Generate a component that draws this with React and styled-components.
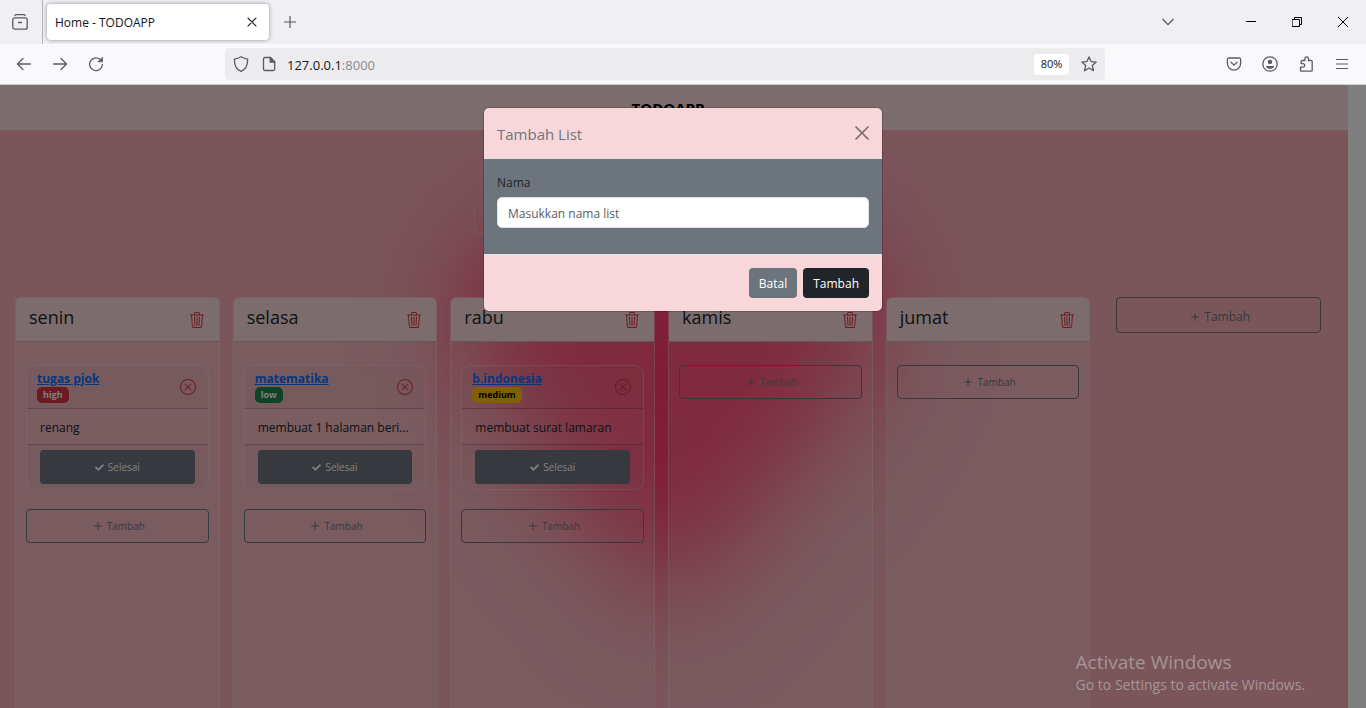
import React from "react";
import styled, { createGlobalStyle, css } from "styled-components";
import { BsTrash3, BsXCircle, BsSearch, BsPlus } from "react-icons/bs";
import { FaCheck } from "react-icons/fa";

const GlobalStyle = createGlobalStyle`
  *, *::before, *::after { box-sizing: border-box; }
  body {
    margin: 0;
    font-family: "Open Sans", "Segoe UI", "Noto Sans", sans-serif;
    font-size: 12px;
    line-height: 18px;
    color: #212529;
  }
  button, input { font: inherit; }
`;

const Window = styled.div`
  display: flex;
  flex-direction: column;
  height: 100vh;
  overflow: hidden;
  position: relative;
`;

/* ---------- browser frame ---------- */

const TabStrip = styled.div`
  display: flex;
  align-items: center;
  flex: none;
  height: 44px;
  background: #f0eff4;
`;

const ToolButton = styled.button`
  display: grid;
  place-items: center;
  flex: none;
  width: ${(p) => p.$width || 36}px;
  height: 36px;
  padding: 0;
  border: 0;
  background: none;
  color: ${(p) => p.$color || "#5b5b66"};
`;

const Divider = styled.div`
  width: 1px;
  height: 44px;
  margin: 0 3px 0 2px;
  background: #b4b4b9;
`;

const Tab = styled.div`
  display: flex;
  align-items: center;
  justify-content: space-between;
  width: 222px;
  height: 36px;
  margin-left: 1px;
  padding: 0 5px 0 8px;
  border-radius: 4px;
  background: #fff;
  box-shadow: 0 0 4px rgba(0, 0, 0, 0.4);
  color: #15141a;
  font-size: 12px;
`;

const TabTitle = styled.span`
  padding-top: 2px;
`;

const Spacer = styled.div`
  flex: 1;
`;

const WindowControls = styled.div`
  display: flex;
  margin-left: 42px;
`;

const Toolbar = styled.div`
  display: flex;
  align-items: center;
  flex: none;
  height: 41px;
  padding: 0 6px;
  background: #f9f9fb;
  border-bottom: 1px solid #cccfd0;
`;

const AddressBar = styled.div`
  display: flex;
  align-items: center;
  flex: 0 1 880px;
  height: 32px;
  margin: 0 auto;
  padding: 0 2px;
  border-radius: 4px;
  background: #ececee;
`;

const AddressIcon = styled.span`
  display: grid;
  place-items: center;
  width: 28px;
  color: #5b5b66;
`;

const Address = styled.div`
  flex: 1;
  padding: 2px 0 0 4px;
  font-size: 13px;
  color: #15141a;
`;

const Port = styled.span`
  color: #8a8a90;
`;

const Zoom = styled.button`
  width: 35px;
  height: 21px;
  padding: 0;
  margin-right: 6px;
  border: 0;
  border-radius: 3px;
  background: #fff;
  color: #15141a;
  font-size: 11px;
`;

const Icon = ({ size = 16, children, ...rest }) => (
  <svg
    width={size}
    height={size}
    viewBox={`0 0 ${size} ${size}`}
    fill="none"
    stroke="currentColor"
    strokeWidth="1.3"
    strokeLinecap="round"
    strokeLinejoin="round"
    aria-hidden="true"
    {...rest}
  >
    {children}
  </svg>
);

/* ---------- page ---------- */

const Viewport = styled.div`
  display: flex;
  flex: 1;
  min-height: 0;
  position: relative;
`;

const Page = styled.main`
  flex: 1;
  min-width: 0;
  position: relative;
  overflow: hidden;
  background: #f4acb7;
`;

const ScrollTrack = styled.div`
  width: 18px;
  background: #fff;
`;

const Wallpaper = styled.svg`
  position: absolute;
  inset: 0;
  width: 100%;
  height: 100%;
`;

const Content = styled.div`
  position: relative;
`;

const Navbar = styled.header`
  height: 45px;
  padding: 10px 12px 0 0;
  background: #f9d9db;
  text-align: center;
`;

const Brand = styled.a`
  color: #000;
  font-size: 15px;
  line-height: 26px;
  font-weight: 700;
  text-decoration: none;
`;

const SearchBox = styled.label`
  display: flex;
  align-items: center;
  width: 400px;
  max-width: 90%;
  height: 34px;
  margin: 70px auto 63px;
  padding: 0 7px;
  border: 1px solid #dcb9be;
  border-radius: 8px;
  color: #dcb9be;
`;

const SearchInput = styled.input`
  flex: 1;
  border: 0;
  background: none;
  outline: 0;
`;

const Board = styled.div`
  display: flex;
  align-items: flex-start;
  gap: 13px;
  padding: 0 27px 0 15px;
`;

const Column = styled.section`
  flex: 1 1 2px;
  min-width: 0;
  height: 520px;
  border: 1px solid rgba(255, 235, 235, 0.3);
  border-radius: 6px;
  background: rgba(255, 255, 255, 0.13);
  overflow: hidden;
`;

const ColumnHeader = styled.div`
  display: flex;
  align-items: center;
  justify-content: space-between;
  height: 44px;
  padding: 0 14px 0 13px;
  background: #f9d9db;
  border-bottom: 1px solid #c9acaf;
`;

const ColumnTitle = styled.h2`
  margin: 0 0 6px;
  font-size: 18px;
  line-height: 24px;
  font-weight: 400;
`;

const IconButton = styled.button`
  display: flex;
  padding: 0;
  border: 0;
  background: none;
  color: #dc3545;
`;

const ColumnBody = styled.div`
  display: flex;
  flex-direction: column;
  gap: 19px;
  padding: 23px 10px;
`;

const Task = styled.article`
  border: 1px solid rgba(255, 235, 235, 0.28);
  border-radius: 9px;
  background: rgba(255, 255, 255, 0.06);
  overflow: hidden;
`;

const TaskHeader = styled.div`
  display: flex;
  align-items: center;
  justify-content: space-between;
  height: 43px;
  padding: 0 12px 0 10px;
  background: rgba(33, 37, 41, 0.03);
  border-bottom: 1px solid rgba(0, 0, 0, 0.2);
`;

const TaskHeading = styled.div`
  display: flex;
  flex-direction: column;
  align-items: flex-start;
  padding-bottom: 2px;
`;

const TaskLink = styled.a`
  color: #0d6efd;
  font-size: 12px;
  line-height: 17px;
  font-weight: 700;
`;

const badgeTones = {
  high: css`
    background: #dc3545;
    color: #fff;
  `,
  low: css`
    background: #198754;
    color: #fff;
  `,
  medium: css`
    background: #ffc107;
    color: #000;
  `,
};

const Badge = styled.span`
  padding: 0 6px;
  border-radius: 5px;
  font-size: 9px;
  line-height: 16px;
  font-weight: 700;
  ${(p) => badgeTones[p.$tone]}
`;

const TaskText = styled.p`
  margin: 0;
  padding: 10px 13px 7px;
`;

const TaskFooter = styled.div`
  padding: 5px 13px;
  background: rgba(33, 37, 41, 0.03);
  border-top: 1px solid rgba(0, 0, 0, 0.2);
`;

const BoardButton = styled.button`
  display: flex;
  align-items: center;
  justify-content: center;
  gap: ${(p) => (p.$solid ? 4 : 1)}px;
  width: 100%;
  height: ${(p) => (p.$large ? 36 : 34)}px;
  padding: ${(p) => (p.$large ? 3 : 0)}px 0 0;
  border: 1px solid #6c757d;
  border-radius: ${(p) => (p.$solid ? 3 : 4)}px;
  background: ${(p) => (p.$solid ? "#6c757d" : "transparent")};
  color: ${(p) => (p.$solid ? "#fff" : "#6c757d")};
  font-size: ${(p) => (p.$large ? 12 : 10)}px;
`;

const NewColumn = styled.div`
  flex: 1 1 2px;
  min-width: 0;
  margin-left: 13px;
`;

/* ---------- dialog ---------- */

const Backdrop = styled.div`
  position: absolute;
  inset: 0;
  display: flex;
  align-items: flex-start;
  justify-content: center;
  padding-top: 23px;
  background: rgba(0, 0, 0, 0.5);
`;

const Dialog = styled.form`
  width: 398px;
  max-width: 90%;
  border-radius: 5px;
  background: #f8d7da;
  box-shadow: 0 0 0 1px rgba(0, 0, 0, 0.18);
  overflow: hidden;
`;

const DialogHeader = styled.div`
  display: flex;
  align-items: center;
  justify-content: space-between;
  height: 51px;
  padding: 0 13px;
  border-bottom: 1px solid #dee2e6;
`;

const DialogTitle = styled.h1`
  margin: 0;
  padding-top: 2px;
  font-size: 15px;
  line-height: 24px;
  font-weight: 400;
  color: #6c757d;
`;

const CloseButton = styled.button`
  display: flex;
  padding: 0;
  border: 0;
  background: none;
  color: #7c6c6d;
`;

const DialogBody = styled.div`
  display: flex;
  flex-direction: column;
  gap: 5px;
  padding: 15px 13px 26px;
  background: #6c757d;
`;

const Field = styled.input`
  height: 31px;
  padding: 2px 10px 0;
  border: 1px solid #dee2e6;
  border-radius: 5px;
  background: #fff;
  font-size: 12px;
  &::placeholder {
    color: #595c5f;
    opacity: 1;
  }
`;

const DialogFooter = styled.div`
  display: flex;
  justify-content: flex-end;
  gap: 6px;
  padding: 13px;
  border-top: 1px solid #dee2e6;
`;

const DialogButton = styled.button`
  height: 30px;
  padding: 2px 10px 0;
  border: 0;
  border-radius: 4px;
  background: ${(p) => (p.$dark ? "#212529" : "#6c757d")};
  color: #fff;
`;

const Watermark = styled.div`
  position: absolute;
  right: 61px;
  bottom: 13px;
  color: #a69496;
  font-size: 14px;
  line-height: 20px;
`;

const WatermarkTitle = styled.div`
  font-size: 19px;
  line-height: 26px;
`;

const columns = [
  { name: "senin", tasks: [{ title: "tugas pjok", level: "high", text: "renang" }] },
  {
    name: "selasa",
    tasks: [{ title: "matematika", level: "low", text: "membuat 1 halaman beri..." }],
  },
  {
    name: "rabu",
    tasks: [{ title: "b.indonesia", level: "medium", text: "membuat surat lamaran" }],
  },
  { name: "kamis", tasks: [] },
  { name: "jumat", tasks: [] },
];

const AddButton = ({ large }) => (
  <BoardButton type="button" $large={large}>
    <BsPlus size={16} />
    Tambah
  </BoardButton>
);

const TaskCard = ({ task }) => (
  <Task>
    <TaskHeader>
      <TaskHeading>
        <TaskLink href="#task">{task.title}</TaskLink>
        <Badge $tone={task.level}>{task.level}</Badge>
      </TaskHeading>
      <IconButton type="button" aria-label="Hapus tugas">
        <BsXCircle size={16} />
      </IconButton>
    </TaskHeader>
    <TaskText>{task.text}</TaskText>
    <TaskFooter>
      <BoardButton type="button" $solid>
        <FaCheck size={9} />
        Selesai
      </BoardButton>
    </TaskFooter>
  </Task>
);

const BrowserChrome = () => (
  <>
    <TabStrip>
      <ToolButton $width={40} aria-label="Recent browsing">
        <Icon>
          <path d="M3 1.5 Q3 .7 4 .7 H12 Q13 .7 13 1.5" />
          <rect x=".8" y="3.8" width="14.4" height="11.4" rx="2" />
          <path d="M6.5 8.5h3" />
        </Icon>
      </ToolButton>
      <Divider />
      <Tab>
        <TabTitle>Home - TODOAPP</TabTitle>
        <ToolButton $width={24} $color="#2b2a33" aria-label="Close tab">
          <Icon size={8} strokeWidth="1.1" overflow="visible">
            <path d="M0 0l8 8M8 0l-8 8" />
          </Icon>
        </ToolButton>
      </Tab>
      <ToolButton $width={42} aria-label="New tab">
        <Icon size={12} strokeWidth="1.2">
          <path d="M6 .5v11M.5 6h11" />
        </Icon>
      </ToolButton>
      <Spacer />
      <ToolButton aria-label="List all tabs">
        <Icon size={12}>
          <path d="M.8 3.2L6 8.6l5.2-5.4" />
        </Icon>
      </ToolButton>
      <WindowControls>
        <ToolButton $width={46} $color="#000" aria-label="Minimize">
          <Icon size={10} strokeWidth="1" strokeLinecap="butt">
            <path d="M0 4.5h10" />
          </Icon>
        </ToolButton>
        <ToolButton $width={46} $color="#000" aria-label="Restore">
          <Icon size={10} strokeWidth="1" strokeLinejoin="miter">
            <path d="M.5 2.5h7v7h-7zM2.500 2.500V.5h7v7h-2" />
          </Icon>
        </ToolButton>
        <ToolButton $width={46} $color="#000" aria-label="Close window">
          <Icon size={10} strokeWidth="1">
            <path d="M0 0l10 10M10 0L0 10" />
          </Icon>
        </ToolButton>
      </WindowControls>
    </TabStrip>
    <Toolbar>
      <ToolButton aria-label="Back">
        <Icon>
          <path d="M14.500 8H1.800M7 2.500L1.500 8 7 13.500" />
        </Icon>
      </ToolButton>
      <ToolButton aria-label="Forward">
        <Icon>
          <path d="M1.500 8h12.700M9 2.500L14.500 8 9 13.500" />
        </Icon>
      </ToolButton>
      <ToolButton aria-label="Reload">
        <Icon>
          <path d="M13 4.200A6.400 6.400 0 1 0 14.400 8.500" />
          <path d="M14.500 1.500v4.300h-4.300z" fill="currentColor" strokeWidth=".8" />
        </Icon>
      </ToolButton>
      <AddressBar>
        <AddressIcon>
          <Icon>
            <path d="M8 .8c2 1.300 4 2 6.600 2.300C14.800 8.800 13.500 13 8 15.300 2.500 13 1.200 8.800 1.400 3.100 4 2.800 6 2.100 8 .8z" />
          </Icon>
        </AddressIcon>
        <AddressIcon>
          <Icon>
            <path d="M4 1.500h5.500L13.700 5.700V13a1.500 1.500 0 0 1-1.500 1.500H4A1.500 1.500 0 0 1 2.500 13V3A1.500 1.500 0 0 1 4 1.500z" />
            <path d="M9.200 1.500v4.700h4.500z" fill="currentColor" />
          </Icon>
        </AddressIcon>
        <Address>
          127.0.0.1<Port>:8000</Port>
        </Address>
        <Zoom type="button">80%</Zoom>
        <ToolButton $width={28} aria-label="Bookmark this page">
          <Icon>
            <path d="M8 .9l2.100 4.700 5.100.5-3.900 3.400 1.200 5.200L8 12l-4.500 2.700 1.200-5.200L.8 6.100l5.100-.5z" />
          </Icon>
        </ToolButton>
      </AddressBar>
      <ToolButton aria-label="Save to Pocket">
        <Icon>
          <path d="M2.700 2h10.600a1.300 1.300 0 0 1 1.300 1.300V7.500a6.600 6.600 0 0 1-13.200 0V3.300A1.300 1.300 0 0 1 2.700 2z" />
          <path d="M5 6.200l3 2.900 3-2.900" />
        </Icon>
      </ToolButton>
      <ToolButton aria-label="Account">
        <Icon>
          <circle cx="8" cy="8" r="7.200" />
          <circle cx="8" cy="5.900" r="2.200" fill="currentColor" stroke="none" />
          <path d="M4 10h8v.6A4.500 3.200 0 0 1 8 13a4.500 3.200 0 0 1-4-2.400z" fill="currentColor" stroke="none" />
        </Icon>
      </ToolButton>
      <ToolButton aria-label="Extensions">
        <Icon>
          <path d="M3.200 15.200h10a1 1 0 0 0 1-1V5.500a1 1 0 0 0-1-1H10.500V2.600a1.800 1.800 0 0 0-3.600 0V4.500H4.200a1 1 0 0 0-1 1V7.700H5a1.700 1.700 0 0 1 0 3.500H2.500v3.200a.8.8 0 0 0 .7.800z" />
        </Icon>
      </ToolButton>
      <ToolButton aria-label="Menu">
        <Icon size={12} strokeWidth="1.2">
          <path d="M.5 1.500h11M.5 6h11M.5 10.500h11" />
        </Icon>
      </ToolButton>
    </Toolbar>
  </>
);

export default function App() {
  return (
    <Window>
      <GlobalStyle />
      <BrowserChrome />
      <Viewport>
        <Page>
          <Wallpaper viewBox="0 0 1348 623" preserveAspectRatio="xMidYMid slice" aria-hidden="true">
            <defs>
              <filter
                id="soft"
                x="-50%"
                y="-60%"
                width="200%"
                height="220%"
                colorInterpolationFilters="sRGB"
              >
                <feGaussianBlur stdDeviation="55" />
              </filter>
            </defs>
            <path
              d="M670 530C590 420 450 300 465 215 480 125 620 110 670 180 720 110 865 125 880 215 890 300 750 420 670 530Z"
              fill="#ff3a68"
              filter="url(#soft)"
            />
          </Wallpaper>
          <Content>
            <Navbar>
              <Brand href="#home">TODOAPP</Brand>
            </Navbar>
            <SearchBox>
              <BsSearch size={13} />
              <SearchInput aria-label="Cari" />
            </SearchBox>
            <Board>
              {columns.map((column) => (
                <Column key={column.name}>
                  <ColumnHeader>
                    <ColumnTitle>{column.name}</ColumnTitle>
                    <IconButton type="button" aria-label="Hapus list">
                      <BsTrash3 size={16} />
                    </IconButton>
                  </ColumnHeader>
                  <ColumnBody>
                    {column.tasks.map((task) => (
                      <TaskCard key={task.title} task={task} />
                    ))}
                    <AddButton />
                  </ColumnBody>
                </Column>
              ))}
              <NewColumn>
                <AddButton large />
              </NewColumn>
            </Board>
          </Content>
        </Page>
        <ScrollTrack />
        <Backdrop>
          <Dialog role="dialog" aria-labelledby="dialog-title">
            <DialogHeader>
              <DialogTitle id="dialog-title">Tambah List</DialogTitle>
              <CloseButton type="button" aria-label="Tutup">
                <Icon size={14} strokeWidth="1.7">
                  <path d="M1 1l12 12M13 1L1 13" />
                </Icon>
              </CloseButton>
            </DialogHeader>
            <DialogBody>
              <label htmlFor="list-name">Nama</label>
              <Field id="list-name" placeholder="Masukkan nama list" />
            </DialogBody>
            <DialogFooter>
              <DialogButton type="button">Batal</DialogButton>
              <DialogButton type="button" $dark>
                Tambah
              </DialogButton>
            </DialogFooter>
          </Dialog>
        </Backdrop>
      </Viewport>
      <Watermark>
        <WatermarkTitle>Activate Windows</WatermarkTitle>
        Go to Settings to activate Windows.
      </Watermark>
    </Window>
  );
}
